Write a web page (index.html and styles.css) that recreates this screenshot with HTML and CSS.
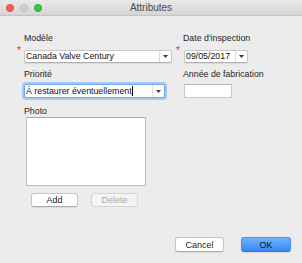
FILE: index.html
```html
<!DOCTYPE html>
<html>
<head>
<meta charset="utf-8">
<link rel="stylesheet" href="styles.css">
</head>
<body>
<div class="window">
  <div class="titlebar">
    <div class="lights">
      <span class="light red"></span>
      <span class="light gray"></span>
      <span class="light green"></span>
    </div>
    <div class="title">Attributes</div>
    <div></div>
  </div>
  <div class="content">
    <div class="grid">
      <div class="field">
        <div class="label">Modèle</div>
        <div class="ctl top">
          <span class="req">*</span>
          <div class="combo w-model">
            <span class="val">Canada Valve Century</span>
            <span class="drop"><svg width="5" height="3" viewBox="0 0 5 3"><path d="M0 0H5L2.5 3Z" fill="#3a3a3a"/></svg></span>
          </div>
        </div>
      </div>
      <div class="field">
        <div class="label">Date d'inspection</div>
        <div class="ctl top">
          <span class="req">*</span>
          <div class="combo w-date">
            <span class="val v-date">09/05/2017</span>
            <span class="drop d-date"><svg width="5" height="3" viewBox="0 0 5 3"><path d="M0 0H5L2.5 3Z" fill="#3a3a3a"/></svg></span>
          </div>
        </div>
      </div>
      <div class="field">
        <div class="label">Priorité</div>
        <div class="ctl second">
          <div class="combo w-prio focus">
            <span class="val">À restaurer éventuellement<span class="caret"></span></span>
            <span class="drop d-prio"><svg width="5" height="3" viewBox="0 0 5 3"><path d="M0 0H5L2.5 3Z" fill="#3a3a3a"/></svg></span>
          </div>
        </div>
      </div>
      <div class="field">
        <div class="label">Année de fabrication</div>
        <div class="ctl second">
          <div class="textbox"></div>
        </div>
      </div>
    </div>
    <div class="photo">
      <div class="label">Photo</div>
      <div class="listbox"></div>
      <div class="photo-buttons">
        <button class="btn small">Add</button>
        <button class="btn small disabled">Delete</button>
      </div>
    </div>
  </div>
  <div class="footer">
    <button class="btn big">Cancel</button>
    <button class="btn big primary">OK</button>
  </div>
</div>
</body>
</html>
```

FILE: styles.css
```css
html, body {
  margin: 0;
  padding: 0;
}
body {
  background: #ececec;
  font-family: "Liberation Sans", Arial, sans-serif;
  font-size: 8.8px;
  color: #262626;
}
.window {
  height: 263px;
  display: flex;
  flex-direction: column;
  overflow: hidden;
}
.titlebar {
  height: 15px;
  border-bottom: 1px solid #c4c4c4;
  background: linear-gradient(#e9e9e9, #d5d5d5);
  display: grid;
  grid-template-columns: 1fr auto 1fr;
  align-items: center;
}
.lights {
  display: flex;
  gap: 6px;
  padding-left: 6px;
}
.light {
  width: 8px;
  height: 8px;
  border-radius: 50%;
  box-sizing: border-box;
}
.light.red { background: #fc5f57; border: 0.5px solid #e0443e; }
.light.gray { background: #d0d0d0; border: 0.5px solid #c0c0c0; }
.light.green { background: #35c84a; border: 0.5px solid #1eab2f; }
.title {
  font-size: 10px;
  color: #4b4b4b;
  line-height: 15px;
}
.content {
  padding: 17px 0 0 24px;
}
.grid {
  display: grid;
  grid-template-columns: 159px auto;
  row-gap: 6px;
}
.label {
  line-height: 11px;
  height: 11px;
  white-space: nowrap;
}
.ctl {
  display: flex;
  align-items: flex-start;
}
.ctl.top { margin-top: 6px; }
.ctl.second { margin-top: 4px; }
.req {
  width: 7px;
  margin-left: -7px;
  margin-top: -3px;
  color: #e3261b;
  font-size: 10px;
  line-height: 8px;
  height: 8px;
}
.combo {
  display: flex;
  box-sizing: border-box;
  height: 13px;
  background: #fff;
  border: 1px solid #c8c8c8;
  border-bottom-color: #b2b2b2;
  border-radius: 2px;
  box-shadow: 0 0.5px 1px rgba(0, 0, 0, 0.08);
}
.combo .val {
  flex: 1;
  padding-left: 1px;
  line-height: 11px;
  white-space: nowrap;
  overflow: hidden;
  color: #111;
}
.combo .drop {
  width: 11px;
  border-left: 1px solid #dcdcdc;
  display: flex;
  align-items: center;
  justify-content: center;
}
.w-model { width: 148px; }
.w-date { width: 64px; margin-left: 1px; }
.v-date { padding-left: 1px; }
.d-date { width: 12px; }
.w-prio {
  width: 141px;
  height: 14px;
}
.w-prio .val { line-height: 12px; }
.d-prio { width: 12px; border-left-color: #a9c6ef; }
.focus {
  border-color: #6fa3ea;
  box-shadow: 0 0 0 2px #a8c8f4;
}
.caret {
  display: inline-block;
  width: 1px;
  height: 10px;
  background: #000;
  vertical-align: -2px;
}
.textbox {
  width: 48px;
  height: 14px;
  box-sizing: border-box;
  margin-left: 1px;
  background: #fff;
  border: 1px solid #c8c8c8;
  border-top-color: #b8b8b8;
}
.photo {
  margin-top: 8px;
}
.listbox {
  margin-left: 2px;
  width: 120px;
  height: 69px;
  box-sizing: border-box;
  background: #fff;
  border: 1px solid #bdbdbd;
  border-top-color: #a8a8a8;
}
.photo-buttons {
  display: flex;
  gap: 13px;
  margin: 7px 0 0 7px;
}
.btn {
  margin: 0;
  padding: 0;
  box-sizing: border-box;
  font-family: inherit;
  font-size: 9px;
  color: #1c1c1c;
  background: #fff;
  border: 1px solid #c6c6c6;
  border-bottom-color: #acacac;
  border-radius: 3px;
  box-shadow: 0 0.5px 1px rgba(0, 0, 0, 0.08);
  display: flex;
  align-items: center;
  justify-content: center;
}
.btn.small {
  width: 47px;
  height: 14px;
}
.btn.disabled {
  color: #a9a9a9;
  background: #f4f4f4;
  border-color: #d4d4d4;
  box-shadow: none;
}
.footer {
  margin-top: auto;
  display: flex;
  justify-content: flex-end;
  gap: 17px;
  padding: 0 11px 11px 0;
}
.btn.big {
  width: 49px;
  height: 15px;
}
.btn.primary {
  width: 50px;
  background: linear-gradient(#6db2fb, #3889f6);
  border-color: #4a8ff0;
  border-bottom-color: #2f72dc;
  color: #111;
}
```
